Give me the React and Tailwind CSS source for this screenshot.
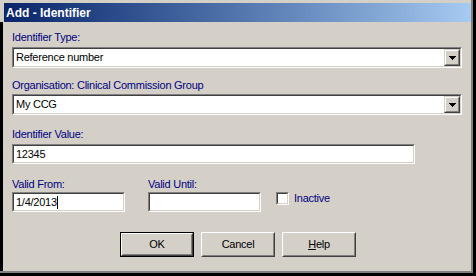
const font = { fontFamily: '"Liberation Sans", Arial, sans-serif' };

function Sunken({ className = "", children }) {
  return (
    <div className={`border border-t-[#808080] border-l-[#808080] border-b-white border-r-white ${className}`}>
      <div className="h-full border border-t-[#404040] border-l-[#404040] border-b-[#d4d0c8] border-r-[#d4d0c8] bg-white flex items-center">
        {children}
      </div>
    </div>
  );
}

function ArrowBtn() {
  return (
    <div className="w-[16px] h-full border border-t-[#d4d0c8] border-l-[#d4d0c8] border-b-[#404040] border-r-[#404040] bg-[#d4d0c8]">
      <div className="w-full h-full border border-t-white border-l-white border-b-[#808080] border-r-[#808080] flex items-center justify-center">
        <svg width="7" height="4" viewBox="0 0 7 4" shapeRendering="crispEdges">
          <rect x="0" y="0" width="7" height="1" fill="#000" />
          <rect x="1" y="1" width="5" height="1" fill="#000" />
          <rect x="2" y="2" width="3" height="1" fill="#000" />
          <rect x="3" y="3" width="1" height="1" fill="#000" />
        </svg>
      </div>
    </div>
  );
}

function Select({ value }) {
  return (
    <Sunken className="h-[21px] w-[450px]">
      <span className="flex-1 pl-[2px] text-[11px] leading-[13px] tracking-[-0.25px] text-black">{value}</span>
      <ArrowBtn />
    </Sunken>
  );
}

function Label({ children, className = "" }) {
  return <div className={`text-[11px] leading-[13px] tracking-[-0.25px] text-[#000080] ${className}`}>{children}</div>;
}

function Button({ children, isDefault }) {
  const inner = (
    <div className="h-full w-full border border-t-white border-l-white border-b-[#404040] border-r-[#404040]">
      <div className="h-full w-full border border-t-[#d4d0c8] border-l-[#d4d0c8] border-b-[#808080] border-r-[#808080] flex items-center justify-center text-[11px] tracking-[-0.25px] text-black">
        {children}
      </div>
    </div>
  );
  if (isDefault) {
    return <div className="w-[74px] h-[25px] border border-black">{inner}</div>;
  }
  return <div className="w-[74px] h-[25px]">{inner}</div>;
}

export default function App() {
  return (
    <div className="w-[476px] h-[276px] bg-black" style={font}>
      <div className="w-[473px] h-[273px] bg-[#d4d0c8] border-r-2 border-b-2 border-[#808080] flex flex-col">
        {/* title bar */}
        <div className="ml-[4px] mt-[3px] h-[19px] w-[467px] bg-gradient-to-r from-[#0a246a] to-[#a6caf0] flex items-center pl-[2px]">
          <span className="text-white font-bold text-[12px] leading-[14px]">Add - Identifier</span>
        </div>

        {/* body */}
        <div className="flex-1 border-l-[3px] border-black pl-[9px] pt-[9px] flex flex-col">
          <Label className="mb-[3px]">Identifier Type:</Label>
          <Select value="Reference number" />

          <Label className="mt-[11px] mb-[2px]">Organisation: Clinical Commission Group</Label>
          <Select value="My CCG" />

          <Label className="mt-[13px] mb-[3px]">Identifier Value:</Label>
          <Sunken className="h-[20px] w-[403px]">
            <span className="pl-[2px] text-[11px] leading-[13px] tracking-[-0.25px] text-black">12345</span>
          </Sunken>

          <div className="flex mt-[14px]">
            <div className="w-[136px]">
              <Label className="mb-[1px]">Valid From:</Label>
              <Sunken className="h-[20px] w-[113px]">
                <span className="pl-[2px] text-[11px] leading-[13px] tracking-[-0.25px] text-black">1/4/2013</span>
                <span className="w-[1px] h-[13px] bg-black" />
              </Sunken>
            </div>
            <div className="w-[128px]">
              <Label className="mb-[1px]">Valid Until:</Label>
              <Sunken className="h-[20px] w-[113px]" />
            </div>
            <div className="flex items-center gap-[5px] mt-[14px] h-[13px]">
              <Sunken className="w-[13px] h-[13px]" />
              <Label>Inactive</Label>
            </div>
          </div>

          <div className="flex gap-[7px] mt-[20px] pl-[108px]">
            <Button isDefault>OK</Button>
            <Button>Cancel</Button>
            <Button><span><span className="underline">H</span>elp</span></Button>
          </div>
        </div>
      </div>
    </div>
  );
}
